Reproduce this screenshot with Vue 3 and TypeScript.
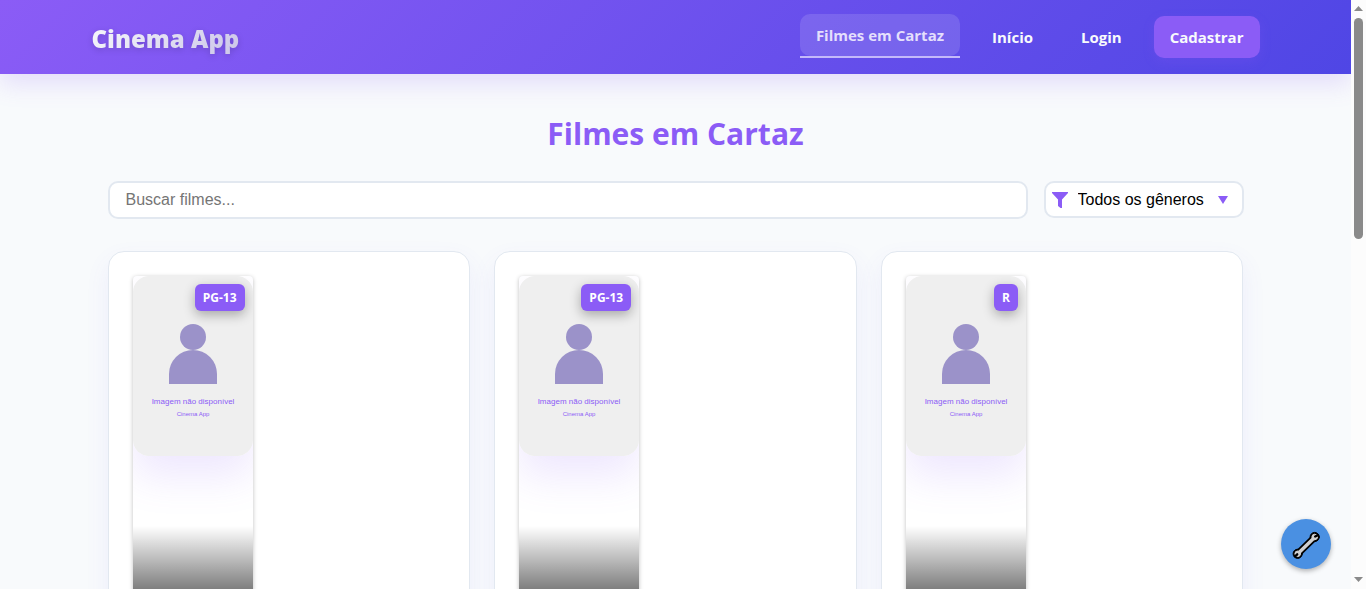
<script setup lang="ts">
import { ref } from 'vue'

interface Movie {
  id: number
  rating: string
}

const movies: Movie[] = [
  { id: 1, rating: 'PG-13' },
  { id: 2, rating: 'PG-13' },
  { id: 3, rating: 'R' },
]

const search = ref('')
const genre = ref('')
</script>

<template>
  <div class="shell">
    <div class="view">
      <header class="header">
        <div class="header-inner">
          <a class="logo" href="#">Cinema App</a>
          <nav class="nav">
            <a class="link active" href="#"><span class="link-box">Filmes em Cartaz</span></a>
            <a class="link" href="#"><span class="link-box">Início</span></a>
            <a class="link" href="#"><span class="link-box">Login</span></a>
            <a class="link" href="#"><span class="link-box primary">Cadastrar</span></a>
          </nav>
        </div>
      </header>

      <main class="main">
        <h1 class="title">Filmes em Cartaz</h1>
        <div class="filters">
          <input v-model="search" class="search" type="text" placeholder="Buscar filmes..." aria-label="Buscar filmes" />
          <div class="genre">
            <svg class="funnel" viewBox="0 0 16 16" width="16" height="16" aria-hidden="true">
              <path d="M0 0H16V1L10 7.500V16H8.500L6 14V7.500L0 1Z" fill="#8b5cf6" />
            </svg>
            <select v-model="genre" class="genre-select" aria-label="Gênero">
              <option value="">Todos os gêneros</option>
            </select>
            <svg class="arrow" viewBox="0 0 10 8" width="10" height="8" aria-hidden="true">
              <path d="M0 0H10L5 8Z" fill="#8b5cf6" />
            </svg>
          </div>
        </div>

        <div class="grid">
          <article v-for="movie in movies" :key="movie.id" class="card">
            <div class="poster">
              <svg class="picture" viewBox="0 0 120 180" width="120" height="180" role="img" aria-label="Imagem não disponível">
                <rect width="120" height="180" fill="#efefef" />
                <circle cx="60" cy="61" r="13" fill="#9b92c9" />
                <path d="M36 108V98A24 24 0 0 1 84 98V108Z" fill="#9b92c9" />
                <text class="caption" x="60" y="128" text-anchor="middle">Imagem não disponível</text>
                <text class="caption small" x="60" y="140" text-anchor="middle">Cinema App</text>
              </svg>
              <span class="badge">{{ movie.rating }}</span>
              <div class="fade"></div>
            </div>
          </article>
        </div>
      </main>

      <button class="tool" type="button" aria-label="Ferramentas">
        <svg viewBox="0 0 30 30" width="30" height="30" fill="none" stroke-linecap="round" aria-hidden="true">
          <g stroke="#000" fill="#000">
            <path d="M7 24.500L23.500 8.500" stroke-width="7" />
            <circle cx="6.700" cy="24.800" r="4.600" />
            <circle cx="23.700" cy="8" r="4.600" />
          </g>
          <g stroke="#d0d0d0" fill="#d0d0d0">
            <path d="M7 24.500L23.500 8.500" stroke-width="3.400" />
            <circle cx="6.700" cy="24.800" r="2.800" />
            <circle cx="23.700" cy="8" r="2.800" />
          </g>
          <path d="M24.200 7.500L27 6.200M6.200 25.300L4 27.500" stroke="#000" stroke-width="2.400" />
        </svg>
      </button>
    </div>

    <div class="scrollbar" aria-hidden="true">
      <svg viewBox="0 0 9 5" width="9" height="5"><path d="M0 5L4.500 0L9 5Z" fill="#8a8a8a" /></svg>
      <div class="track"><div class="thumb"></div></div>
      <svg viewBox="0 0 9 5" width="9" height="5"><path d="M0 0H9L4.500 5Z" fill="#8a8a8a" /></svg>
    </div>
  </div>
</template>

<style>
body {
  overflow: hidden;
}
</style>

<style scoped>
* {
  box-sizing: border-box;
}

.shell {
  display: flex;
  height: 100vh;
  overflow: hidden;
  background: #f8fafc;
  font-family: 'Segoe UI', 'Open Sans', 'Noto Sans', sans-serif;
}

.view {
  position: relative;
  flex: 1;
  min-width: 0;
  overflow: hidden;
}

.header {
  position: relative;
  z-index: 1;
  background: linear-gradient(135deg, #8b5cf6, #4f46e5);
  box-shadow: 0 10px 25px rgba(139, 92, 246, 0.18);
}

.header-inner {
  display: flex;
  justify-content: space-between;
  align-items: center;
  max-width: 1200px;
  margin: 0 auto;
  padding: 14px 16px 16px;
}

.logo {
  padding-top: 6px;
  background: linear-gradient(135deg, #f8fafc, #cbc5e8);
  background-clip: text;
  color: transparent;
  font-size: 24px;
  font-weight: 800;
  line-height: 36px;
  text-decoration: none;
  filter: drop-shadow(0 2px 3px rgba(0, 0, 0, 0.15));
}

.nav {
  display: flex;
  align-items: flex-end;
  gap: 16px;
}

.link {
  color: #f8fafc;
  font-size: 15px;
  font-weight: 700;
  line-height: 26px;
  text-decoration: none;
}

.link-box {
  display: block;
  padding: 8px 16px;
  border-radius: 10px;
}

.active {
  border-bottom: 2px solid #c4b9fa;
  color: #e4dffc;
}

.active .link-box {
  background: rgba(255, 255, 255, 0.13);
}

.primary {
  background: #8b5cf6;
  box-shadow: 0 4px 12px rgba(139, 92, 246, 0.2);
}

.main {
  max-width: 1200px;
  margin: 0 auto;
  padding: 36px 32px;
}

.title {
  margin: 0 0 23px;
  color: #8b5cf6;
  font-size: 30px;
  font-weight: 700;
  line-height: 48px;
  text-align: center;
}

.filters {
  display: flex;
  align-items: flex-start;
  gap: 16px;
  margin-bottom: 32px;
}

.search,
.genre {
  height: 38px;
  border: 2px solid #e2e8f0;
  border-radius: 10px;
  background: #fff;
  font-family: 'Liberation Sans', Arial, sans-serif;
  font-size: 16px;
}

.search {
  flex: 1;
  min-width: 0;
  padding: 0 16px;
  outline: none;
}

.search::placeholder {
  color: #757575;
}

.genre {
  display: flex;
  align-items: center;
  width: 200px;
  height: 37px;
  padding: 0 14px 0 6px;
}

.genre-select {
  flex: 1;
  min-width: 0;
  padding: 0 0 0 10px;
  border: 0;
  appearance: none;
  background: transparent;
  color: #000;
  font: inherit;
  outline: none;
}

.grid {
  display: grid;
  grid-template-columns: repeat(3, 1fr);
  gap: 24px;
}

.card {
  padding: 24px;
  border: 1px solid #e2e8f0;
  border-radius: 16px;
  background: #fff;
  box-shadow: 0 10px 25px rgba(99, 92, 246, 0.08);
}

.poster {
  position: relative;
  width: 120px;
  height: 375px;
  border-radius: 4px;
  overflow: hidden;
  box-shadow: 0 1px 4px rgba(0, 0, 0, 0.25);
}

.picture {
  display: block;
  border-radius: 16px;
  box-shadow: 0 20px 40px rgba(139, 92, 246, 0.15);
}

.caption {
  fill: #8b5cf6;
  font-family: 'Liberation Sans', Arial, sans-serif;
  font-size: 8px;
}

.small {
  font-size: 6px;
}

.badge {
  position: absolute;
  top: 8px;
  right: 8px;
  padding: 4px 8px;
  border-radius: 6px;
  background: #8b5cf6;
  box-shadow: 0 4px 12px rgba(0, 0, 0, 0.3);
  color: #fff;
  font-size: 12px;
  font-weight: 700;
  line-height: 19px;
}

.fade {
  position: absolute;
  right: 0;
  bottom: 0;
  left: 0;
  height: 125px;
  background: linear-gradient(transparent, #000);
}

.tool {
  position: absolute;
  right: 20px;
  bottom: 20px;
  z-index: 2;
  display: flex;
  align-items: center;
  justify-content: center;
  width: 50px;
  height: 50px;
  padding: 0;
  border: 0;
  border-radius: 50%;
  background: #4a90e2;
  box-shadow: 0 2px 5px rgba(0, 0, 0, 0.3);
}

.scrollbar {
  display: flex;
  flex-direction: column;
  align-items: center;
  gap: 7px;
  width: 15px;
  padding: 6px 0 7px;
  background: #fcfcfc;
}

.track {
  flex: 1;
}

.thumb {
  width: 9px;
  height: 40%;
  border-radius: 5px;
  background: #8a8a8a;
}
</style>
